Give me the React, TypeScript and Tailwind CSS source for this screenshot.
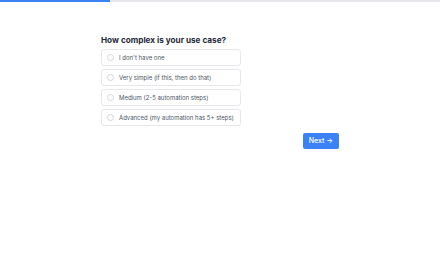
const options = [
  "I don't have one",
  "Very simple (if this, then do that)",
  "Medium (2-5 automation steps)",
  "Advanced (my automation has 5+ steps)",
];

export default function App() {
  return (
    <div className="min-h-screen bg-white font-['Inter',sans-serif]">
      {/* progress */}
      <div className="h-[2px] w-full bg-gray-200">
        <div className="h-full w-1/4 bg-[#3b82f6]" />
      </div>

      <div className="mx-auto w-[238px] pt-[33px]">
        <h1 className="text-[8.2px] font-bold leading-[11px] text-[#1f2937]">
          How complex is your use case?
        </h1>

        <div className="mt-[3px] flex w-[140px] flex-col gap-[3px]">
          {options.map((opt) => (
            <label
              key={opt}
              className="flex h-[17px] items-center gap-[5px] whitespace-nowrap rounded-[3px] border border-gray-200 px-[5px] text-[6px] text-[#4b5563]"
            >
              <span className="h-[7px] w-[7px] shrink-0 rounded-full border border-gray-300" />
              {opt}
            </label>
          ))}
        </div>

        <div className="mt-[7px] flex justify-end">
          <button className="flex h-[16px] items-center rounded-[2px] bg-[#3b82f6] px-[6px] text-[7px] font-medium text-white">
            Next →
          </button>
        </div>
      </div>
    </div>
  );
}
